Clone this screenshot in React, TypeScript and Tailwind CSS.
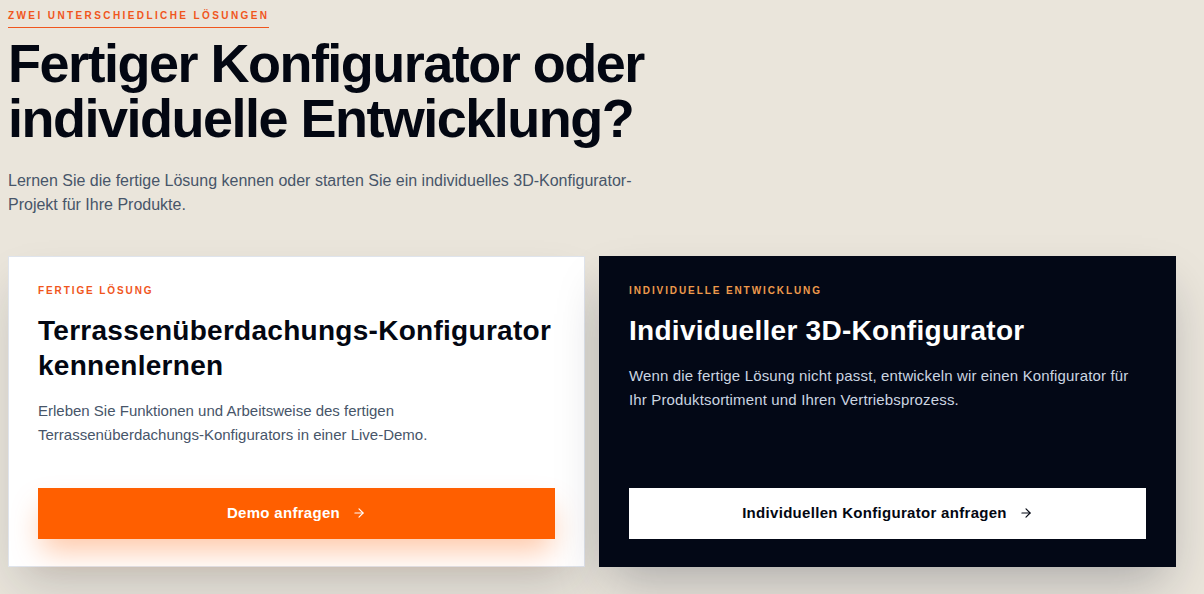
import React from 'react';
import { ArrowRight } from 'lucide-react';

const font = { fontFamily: '"Liberation Sans", Arial, Helvetica, sans-serif' };

interface OptionCardProps {
    eyebrow: string;
    title: React.ReactNode;
    text: React.ReactNode;
    cta: string;
    dark?: boolean;
}

const OptionCard = ({ eyebrow, title, text, cta, dark = false }: OptionCardProps) => (
    <div
        className={
            dark
                ? 'flex flex-col h-[311px] pt-[27px] pb-[27px] px-[29px] bg-[#030816] border border-[#030816] shadow-[0_24px_48px_-10px_rgba(15,23,42,0.28)]'
                : 'flex flex-col h-[311px] pt-[27px] pb-[27px] px-[29px] bg-white border border-[#dfe4ec] shadow-[0_24px_48px_-10px_rgba(15,23,42,0.2)]'
        }
    >
        <span
            className={
                dark
                    ? 'text-[10px] leading-[14px] font-bold uppercase tracking-[0.19em] text-[#ee9a4c]'
                    : 'text-[10px] leading-[14px] font-bold uppercase tracking-[0.19em] text-[#f0561d]'
            }
        >
            {eyebrow}
        </span>
        <h3
            className={
                dark
                    ? 'mt-[15px] text-[28px] leading-[35px] font-bold tracking-[0.01em] text-white'
                    : 'mt-[15px] text-[28px] leading-[35px] font-bold tracking-[0.01em] text-[#030712]'
            }
        >
            {title}
        </h3>
        <p
            className={
                dark
                    ? 'mt-[16px] max-w-[506px] text-[15px] leading-[1.625] tracking-[0.01em] text-[#cbd5e1]'
                    : 'mt-[16px] max-w-[470px] text-[15px] leading-[1.625] text-[#475569]'
            }
        >
            {text}
        </p>
        <button
            className={
                dark
                    ? 'mt-auto h-[51px] w-full flex items-center justify-center gap-3 bg-white text-[#030712] text-[15px] font-bold tracking-[0.02em]'
                    : 'mt-auto h-[51px] w-full flex items-center justify-center gap-3 bg-[#ff5f00] text-white text-[15px] font-bold tracking-[0.02em] shadow-[0_16px_30px_-4px_rgba(255,95,0,0.35)]'
            }
        >
            <span>{cta}</span>
            <ArrowRight size={14} strokeWidth={2} />
        </button>
    </div>
);

export default function App() {
    return (
        <div className="min-h-[594px] w-full bg-[#eae5db] pt-[9px] px-[8px]" style={font}>
            <span className="block w-fit pb-[4px] border-b border-[#f0561d] text-[10px] leading-[14px] font-bold uppercase tracking-[0.24em] text-[#f0561d]">
                Zwei unterschiedliche Lösungen
            </span>

            <h1 className="mt-[8px] max-w-[720px] text-[54px] leading-[55px] font-bold tracking-[-0.028em] text-[#030712]">
                Fertiger Konfigurator oder individuelle Entwicklung?
            </h1>

            <p className="mt-[23px] max-w-[640px] text-[16px] leading-[24.4px] text-[#475569]">
                Lernen Sie die fertige Lösung kennen oder starten Sie ein individuelles 3D-Konfigurator-Projekt für Ihre Produkte.
            </p>

            <div className="mt-[38px] w-[1168px] grid grid-cols-2 gap-[14px]">
                <OptionCard
                    eyebrow="Fertige Lösung"
                    title={<>Terrassenüberdachungs-Konfigurator<br />kennenlernen</>}
                    text="Erleben Sie Funktionen und Arbeitsweise des fertigen Terrassenüberdachungs-Konfigurators in einer Live-Demo."
                    cta="Demo anfragen"
                />
                <OptionCard
                    dark
                    eyebrow="Individuelle Entwicklung"
                    title="Individueller 3D-Konfigurator"
                    text="Wenn die fertige Lösung nicht passt, entwickeln wir einen Konfigurator für Ihr Produktsortiment und Ihren Vertriebsprozess."
                    cta="Individuellen Konfigurator anfragen"
                />
            </div>
        </div>
    );
}
